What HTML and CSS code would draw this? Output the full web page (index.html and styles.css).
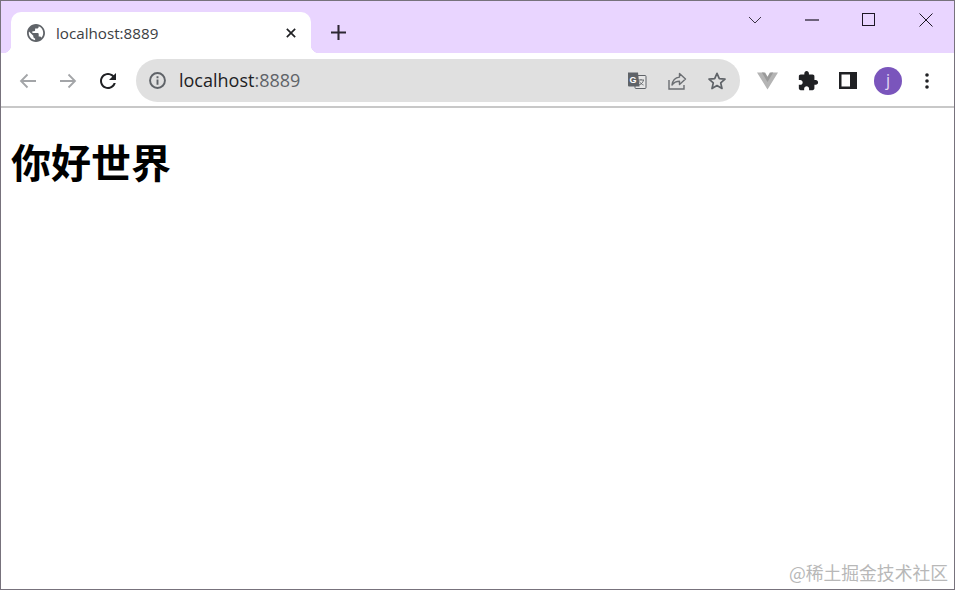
FILE: index.html
```html
<!DOCTYPE html>
<html lang="zh-CN">
<head>
    <meta charset="UTF-8">
    <title>localhost:8889</title>
    <link rel="stylesheet" href="styles.css">
</head>
<body>
    <div class="window">
        <div class="titlebar">
            <div class="tab">
                <svg class="favicon" viewBox="2 2 20 20"><path fill="#5f6368" d="M12 2C6.48 2 2 6.48 2 12s4.48 10 10 10 10-4.48 10-10S17.52 2 12 2zm-1 17.93c-3.95-.49-7-3.85-7-7.93 0-.62.08-1.21.21-1.79L9 15v1c0 1.1.9 2 2 2v1.93zm6.9-2.54c-.26-.81-1-1.39-1.9-1.39h-1v-3c0-.55-.45-1-1-1H8v-2h2c.55 0 1-.45 1-1V7h2c1.1 0 2-.9 2-2v-.41c2.93 1.19 5 4.06 5 7.41 0 2.08-.8 3.97-2.1 5.39z"/></svg>
                <span class="tab-title">localhost:8889</span>
                <svg class="tab-close" viewBox="0 0 12 12"><path d="M1 1l10 10M11 1L1 11" stroke="#202124" stroke-width="2" fill="none"/></svg>
            </div>
            <svg class="new-tab" viewBox="0 0 16 16"><path d="M8 0v16M0 8h16" stroke="#2d2733" stroke-width="2.2" fill="none"/></svg>
            <div class="win-controls">
                <div class="win-btn"><svg width="14" height="8" viewBox="0 0 14 8"><path d="M1 1l6 6 6-6" stroke="#3b3544" fill="none"/></svg></div>
                <div class="win-btn"><svg width="14" height="2" viewBox="0 0 14 2"><path d="M0 1h14" stroke="#1c1724" stroke-width="1.2" fill="none"/></svg></div>
                <div class="win-btn"><svg width="13" height="13" viewBox="0 0 13 13"><rect x=".5" y=".5" width="12" height="12" stroke="#1c1724" fill="none"/></svg></div>
                <div class="win-btn"><svg width="14" height="14" viewBox="0 0 14 14"><path d="M.5.5l13 13M13.5.5l-13 13" stroke="#1c1724" fill="none"/></svg></div>
            </div>
        </div>

        <div class="toolbar">
            <div class="tool"><svg width="18" height="16" viewBox="0 0 18 16"><path d="M17 8H2M8.5 1.5L2 8l6.500 6.500" stroke="#a3a5a8" stroke-width="1.800" fill="none"/></svg></div>
            <div class="tool"><svg width="18" height="16" viewBox="0 0 18 16"><path d="M1 8h15M9.500 1.500L16 8l-6.500 6.500" stroke="#a3a5a8" stroke-width="1.800" fill="none"/></svg></div>
            <div class="tool"><svg width="24" height="24" viewBox="0 0 24 24"><path fill="#202124" d="M17.650 6.350C16.200 4.900 14.210 4 12 4c-4.420 0-7.990 3.580-7.990 8s3.570 8 7.990 8c3.730 0 6.840-2.550 7.730-6h-2.080c-.82 2.330-3.040 4-5.650 4-3.310 0-6-2.690-6-6s2.690-6 6-6c1.660 0 3.140.69 4.220 1.780L13 11h7V4l-2.350 2.350z"/></svg></div>

            <div class="omnibox">
                <svg class="info" width="17" height="17" viewBox="0 0 16 16"><circle cx="8" cy="8" r="7" stroke="#5f6368" stroke-width="1.800" fill="none"/><path d="M7.100 7h1.800v5H7.100zM7.100 4h1.800v1.800H7.100z" fill="#5f6368"/></svg>
                <span class="url">localhost<span class="port">:8889</span></span>
                <div class="omni-actions">
                    <div class="omni-btn"><svg width="20" height="20" viewBox="0 0 20 20"><rect x="8" y="4.500" width="11" height="13" rx="1" fill="#e6e6e6" stroke="#5f6368"/><path d="M11 9h6M14 8v1M12 14c3-1 4-3 4.500-5M12.500 10.500c1 2 2.500 3 4 3.500" stroke="#5f6368" stroke-width=".9" fill="none"/><path d="M1 1.500h10l1.500 14H2a1 1 0 0 1-1-1z" fill="#5f6368"/><text class="g-mark" x="2.500" y="12">G</text></svg></div>
                    <div class="omni-btn"><svg width="20" height="20" viewBox="0 0 20 20"><path d="M2 9v9h15v-4" stroke="#6b6e72" stroke-width="1.400" fill="none"/><path d="M12.500 2.500L18.500 8l-6 5.500V10.300c-3.300 0-5.500 1-7.500 3.700.5-4.200 3-7.400 7.500-7.900z" stroke="#6b6e72" stroke-width="1.400" stroke-linejoin="round" fill="none"/></svg></div>
                    <div class="omni-btn"><svg width="20" height="20" viewBox="0 0 20 20"><path d="M10 2.300l2.300 5.300 5.700.5-4.300 3.800 1.300 5.600L10 14.600l-5 2.900 1.300-5.600L2 8.100l5.700-.5z" stroke="#5f6368" stroke-width="1.700" stroke-linejoin="round" fill="none"/></svg></div>
                </div>
            </div>

            <div class="extensions">
                <div class="tool"><svg class="vue-icon" width="21" height="18" viewBox="0 0 22 18"><path d="M0 0h7l4 7 4-7h7L11 18z" fill="#b4b4b4"/><path d="M5 0h3.500L11 4.500 13.500 0H17l-6 10z" fill="#9a9a9a"/></svg></div>
                <div class="tool"><svg width="22" height="22" viewBox="0 0 24 24"><path fill="#202124" d="M20.500 11H19V7c0-1.100-.9-2-2-2h-4V3.500C13 2.120 11.880 1 10.500 1S8 2.120 8 3.500V5H4c-1.100 0-1.990.9-1.990 2v3.800H3.500c1.490 0 2.700 1.210 2.700 2.700s-1.210 2.700-2.700 2.700H2V20c0 1.100.9 2 2 2h3.800v-1.500c0-1.490 1.210-2.700 2.700-2.700 1.490 0 2.700 1.210 2.700 2.700V22H17c1.100 0 2-.9 2-2v-4h1.500c1.380 0 2.500-1.120 2.500-2.500S21.880 11 20.500 11z"/></svg></div>
                <div class="tool"><svg width="18" height="17" viewBox="0 0 18 17"><path fill-rule="evenodd" d="M0 0h18v17H0zM2.500 2.500v12H11v-12z" fill="#202124"/></svg></div>
                <div class="tool"><div class="avatar">j</div></div>
                <div class="tool menu"><svg width="4" height="16" viewBox="0 0 4 16"><circle cx="2" cy="2" r="1.800" fill="#202124"/><circle cx="2" cy="8" r="1.800" fill="#202124"/><circle cx="2" cy="14" r="1.800" fill="#202124"/></svg></div>
            </div>
        </div>

        <div class="content">
            <h1>你好世界</h1>
            <div class="watermark">@稀土掘金技术社区</div>
        </div>
    </div>
</body>
</html>
```

FILE: styles.css
```css
html, body {
    height: 100%;
}
body {
    margin: 0;
    background: white;
    font-family: "Open Sans", "Noto Sans CJK SC", sans-serif;
}
.window {
    box-sizing: border-box;
    height: 590px;
    display: flex;
    flex-direction: column;
    border: 1px solid #77727c;
    overflow: hidden;
}

/* title bar */
.titlebar {
    height: 52px;
    flex: none;
    display: flex;
    align-items: flex-end;
    padding-left: 10px;
    background: #e9d5ff;
}
.tab {
    position: relative;
    box-sizing: border-box;
    width: 300px;
    height: 41px;
    display: flex;
    align-items: center;
    padding: 0 15px 0 16px;
    background: white;
    border-radius: 10px 10px 0 0;
}
.tab::before, .tab::after {
    content: "";
    position: absolute;
    bottom: 0;
    width: 8px;
    height: 8px;
    background: radial-gradient(circle at 100% 0, #e9d5ff 8px, white 8.500px);
}
.tab::before {
    left: -8px;
    transform: scaleX(-1);
}
.tab::after {
    right: -8px;
}
.favicon {
    width: 18px;
    height: 18px;
    flex: none;
}
.tab-title {
    margin-left: 11px;
    flex: 1;
    font-size: 15.2px;
    color: #3c4043;
}
.tab-close {
    width: 10px;
    height: 10px;
    flex: none;
}
.new-tab {
    width: 15px;
    height: 15px;
    margin: 0 0 13px 20px;
}
.win-controls {
    margin-left: auto;
    align-self: flex-start;
    display: flex;
}
.win-btn {
    width: 57px;
    height: 37px;
    display: flex;
    align-items: center;
    justify-content: center;
}

/* toolbar */
.toolbar {
    height: 55px;
    flex: none;
    box-sizing: border-box;
    display: flex;
    align-items: center;
    padding: 2px 0 0 7px;
    background: white;
    border-bottom: 2px solid #c8c8c8;
}
.tool {
    width: 40px;
    height: 40px;
    flex: none;
    display: flex;
    align-items: center;
    justify-content: center;
}
.menu {
    width: 38px;
}
.vue-icon {
    margin-right: 2px;
}
.omnibox {
    box-sizing: border-box;
    width: 604px;
    height: 43px;
    margin-left: 8px;
    flex: none;
    display: flex;
    align-items: center;
    padding: 0 3px 0 13px;
    background: #e0e0e0;
    border-radius: 22px;
}
.url {
    margin-left: 13px;
    padding-bottom: 2px;
    font-size: 18px;
    color: #202124;
}
.port {
    color: #5f6368;
}
.omni-actions {
    margin-left: auto;
    display: flex;
}
.omni-btn {
    width: 40px;
    display: flex;
    justify-content: center;
}
.g-mark {
    font-family: "Liberation Sans", sans-serif;
    font-size: 9px;
    font-weight: bold;
    fill: white;
}
.extensions {
    margin-left: 8px;
    display: flex;
}
.avatar {
    width: 28px;
    height: 28px;
    border-radius: 50%;
    background: #7a55bc;
    color: #e5daf5;
    font-size: 16px;
    text-align: center;
    line-height: 27px;
}

/* page */
.content {
    position: relative;
    flex: 1;
    padding: 25px 10px 0;
    background: white;
}
h1 {
    margin: 0;
    font-family: "Noto Sans CJK SC", sans-serif;
    font-size: 40px;
    line-height: 56px;
    font-weight: bold;
    color: black;
}
.watermark {
    position: absolute;
    right: 6px;
    bottom: 4px;
    font-family: "Noto Sans CJK SC", sans-serif;
    font-size: 17.8px;
    color: #b8b8b8;
}
```
